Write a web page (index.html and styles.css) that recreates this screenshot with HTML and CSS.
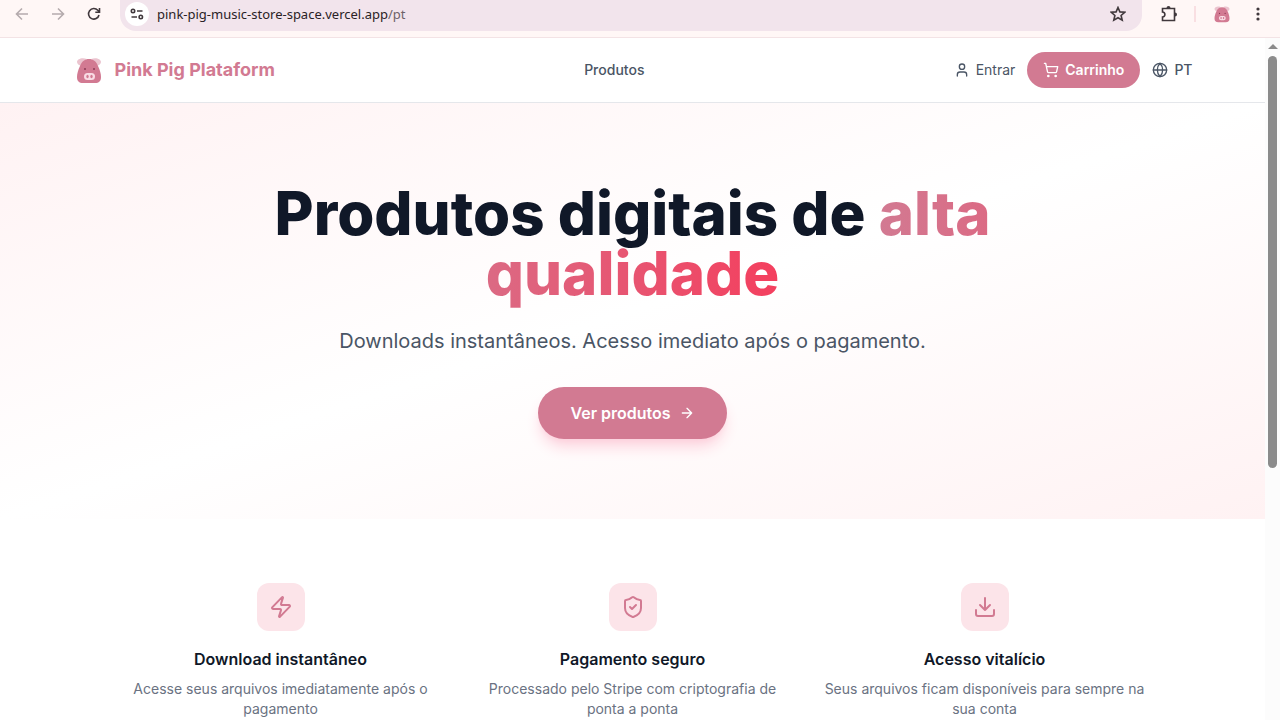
FILE: index.html
```html
<!DOCTYPE html>
<html lang="pt">
<head>
    <meta charset="utf-8">
    <title>Pink Pig Plataform</title>
    <link rel="stylesheet" href="styles.css">
</head>
<body>
    <svg class="symbols" aria-hidden="true">
        <symbol id="pig" viewBox="0 0 32 32">
            <path d="M4 8c0-3 5-5 10-3l-6 7c-2-1-4-2-4-4zM28 8c0-3-5-5-10-3l6 7c2-1 4-2 4-4z" fill="#ebc4cf"/>
            <path d="M16 5c4 0 7 2 9 7 2 4 3 8 3 11 0 4-2 6-6 6H10c-4 0-6-2-6-6 0-3 1-7 3-11 2-5 5-7 9-7z" fill="#d27a92"/>
            <circle cx="12" cy="15" r="1" fill="#8d3c56"/>
            <circle cx="21" cy="15" r="1" fill="#8d3c56"/>
            <rect x="11" y="19" width="11" height="7" rx="3.500" fill="#f9dce4"/>
            <ellipse cx="14.5" cy="22.500" rx="1.2" ry="1.800" fill="#d27a92"/>
            <ellipse cx="18.5" cy="22.500" rx="1.2" ry="1.800" fill="#d27a92"/>
        </symbol>
    </svg>

    <div class="toolbar">
        <div class="nav-buttons">
            <button type="button" class="tool muted" aria-label="Voltar">
                <svg width="16" height="16" viewBox="0 0 16 16"><path d="M14 8H2.500M8 2.500L2.500 8 8 13.500"/></svg>
            </button>
            <button type="button" class="tool muted" aria-label="Avançar">
                <svg width="16" height="16" viewBox="0 0 16 16"><path d="M2 8h11.500M8 2.500l5.500 5.500L8 13.500"/></svg>
            </button>
            <button type="button" class="tool" aria-label="Recarregar">
                <svg width="16" height="16" viewBox="0 0 16 16"><path d="M13 9a5.300 5.300 0 1 1-1.200-4.700L13.500 6M13.500 2v4.200H9.300"/></svg>
            </button>
        </div>
        <div class="address">
            <button type="button" class="site-info" aria-label="Informações do site">
                <svg width="14" height="14" viewBox="0 0 14 14"><circle cx="3" cy="4" r="1.700"/><path d="M7 4h5.500M1.500 10H7"/><circle cx="10.800" cy="10" r="1.700"/></svg>
            </button>
            <span class="url">pink-pig-music-store-space.vercel.app<span class="path">/pt</span></span>
            <button type="button" class="tool" aria-label="Favoritar">
                <svg width="16" height="16" viewBox="0 0 16 16"><path d="M8 1.500l1.900 4.400 4.800.4-3.600 3.200 1.100 4.700L8 11.700l-4.200 2.500 1.100-4.700L1.300 6.300l4.800-.4z"/></svg>
            </button>
        </div>
        <div class="extras">
            <button type="button" class="tool" aria-label="Extensões">
                <svg width="18" height="18" viewBox="0 0 18 18"><path d="M2.500 3.500h12v12h-12v-3.500c3.200-.4 3.200-4.600 0-5z"/><path d="M6.500 3a2 2 0 0 1 4 0zM15 7.500a2 2 0 0 1 0 4z" fill="currentColor" stroke="none"/></svg>
            </button>
            <span class="divider"></span>
            <svg width="20" height="20"><use href="#pig"/></svg>
            <button type="button" class="tool" aria-label="Menu">
                <svg width="16" height="16" viewBox="0 0 16 16"><g fill="currentColor" stroke="none"><circle cx="8" cy="3" r="1.600"/><circle cx="8" cy="8" r="1.600"/><circle cx="8" cy="13" r="1.600"/></g></svg>
            </button>
        </div>
    </div>

    <div class="viewport">
        <div class="page">
            <header class="header">
                <div class="container">
                    <a href="#" class="brand">
                        <svg width="32" height="32"><use href="#pig"/></svg>
                        Pink Pig Plataform
                    </a>
                    <nav><a href="#produtos" class="nav-link">Produtos</a></nav>
                    <div class="actions">
                        <a href="#" class="login">
                            <svg class="icon" width="16" height="16" viewBox="0 0 24 24"><path d="M19 21v-2a4 4 0 0 0-4-4H9a4 4 0 0 0-4 4v2"/><circle cx="12" cy="7" r="4"/></svg>
                            Entrar
                        </a>
                        <button type="button" class="cart">
                            <svg class="icon" width="16" height="16" viewBox="0 0 24 24"><circle cx="8" cy="21" r="1"/><circle cx="19" cy="21" r="1"/><path d="M2.050 2.050h2l2.660 12.420a2 2 0 0 0 2 1.580h9.780a2 2 0 0 0 1.950-1.570l1.650-7.430H5.120"/></svg>
                            Carrinho
                        </button>
                        <button type="button" class="lang">
                            <svg class="icon" width="16" height="16" viewBox="0 0 24 24"><circle cx="12" cy="12" r="10"/><path d="M12 2a14.500 14.500 0 0 0 0 20 14.500 14.500 0 0 0 0-20M2 12h20"/></svg>
                            PT
                        </button>
                    </div>
                </div>
            </header>

            <section class="hero">
                <h1>Produtos digitais de <span class="highlight">alta qualidade</span></h1>
                <p>Downloads instantâneos. Acesso imediato após o pagamento.</p>
                <a href="#produtos" class="cta">
                    Ver produtos
                    <svg class="icon" width="16" height="16" viewBox="0 0 24 24"><path d="M5 12h14M12 5l7 7-7 7"/></svg>
                </a>
            </section>

            <section class="features">
                <div class="feature">
                    <div class="feature-icon">
                        <svg class="icon" width="24" height="24" viewBox="0 0 24 24"><path d="M4 14a1 1 0 0 1-.78-1.630l9.900-10.200a.5.5 0 0 1 .86.460l-1.920 6.020A1 1 0 0 0 13 10h7a1 1 0 0 1 .78 1.630l-9.900 10.200a.5.5 0 0 1-.86-.460l1.920-6.020A1 1 0 0 0 11 14z"/></svg>
                    </div>
                    <h2>Download instantâneo</h2>
                    <p>Acesse seus arquivos imediatamente após o pagamento</p>
                </div>
                <div class="feature">
                    <div class="feature-icon">
                        <svg class="icon" width="24" height="24" viewBox="0 0 24 24"><path d="M20 13c0 5-3.500 7.500-7.660 8.950a1 1 0 0 1-.67-.010C7.500 20.500 4 18 4 13V6a1 1 0 0 1 1-1c2 0 4.500-1.200 6.240-2.720a1.170 1.170 0 0 1 1.520 0C14.510 3.810 17 5 19 5a1 1 0 0 1 1 1z"/><path d="M9 12l2 2 4-4"/></svg>
                    </div>
                    <h2>Pagamento seguro</h2>
                    <p>Processado pelo Stripe com criptografia de ponta a ponta</p>
                </div>
                <div class="feature">
                    <div class="feature-icon">
                        <svg class="icon" width="24" height="24" viewBox="0 0 24 24"><path d="M12 15V3M21 15v4a2 2 0 0 1-2 2H5a2 2 0 0 1-2-2v-4M7 10l5 5 5-5"/></svg>
                    </div>
                    <h2>Acesso vitalício</h2>
                    <p>Seus arquivos ficam disponíveis para sempre na sua conta</p>
                </div>
            </section>
        </div>
        <div class="scrollbar">
            <span class="arrow"></span>
            <span class="thumb"></span>
        </div>
    </div>
</body>
</html>
```
FILE: styles.css
```css
* {
    box-sizing: border-box;
}
body {
    display: flex;
    flex-direction: column;
    height: 100vh;
    margin: 0;
    overflow: hidden;
    font-family: Inter, "Liberation Sans", sans-serif;
    color: #101828;
    background-color: #fff;
}
h1, h2, p {
    margin: 0;
}
a {
    color: inherit;
    text-decoration: none;
}
button {
    padding: 0;
    border: none;
    background: none;
    font-family: inherit;
    color: inherit;
    cursor: pointer;
}
svg {
    display: block;
    flex-shrink: 0;
}
.symbols {
    position: absolute;
    width: 0;
    height: 0;
}
.icon {
    fill: none;
    stroke: currentColor;
    stroke-width: 2;
    stroke-linecap: round;
    stroke-linejoin: round;
}

/* Browser toolbar */
.toolbar {
    display: flex;
    align-items: flex-start;
    height: 38px;
    flex-shrink: 0;
    background-color: #fff7f6;
    border-bottom: 1px solid #f3e3e5;
}
.nav-buttons {
    display: flex;
    align-items: center;
    gap: 20px;
    height: 28px;
    padding: 0 18px 0 14px;
}
.tool {
    color: #40383c;
}
.tool svg, .site-info svg {
    fill: none;
    stroke: currentColor;
    stroke-width: 1.6;
}
.muted {
    color: #b5abad;
}
.address {
    display: flex;
    flex: 1;
    align-items: center;
    height: 31px;
    padding: 0 16px 3px 5px;
    border-radius: 0 0 16px 16px;
    background-color: #f2e4ec;
}
.site-info {
    display: flex;
    align-items: center;
    justify-content: center;
    width: 24px;
    height: 24px;
    border-radius: 50%;
    background-color: #fff;
    color: #40383c;
}
.url {
    flex: 1;
    padding-left: 8px;
    font-family: "Noto Sans", "Open Sans", sans-serif;
    font-size: 13px;
    line-height: 18px;
    color: #2a2226;
}
.path {
    color: #6d6268;
}
.extras {
    display: flex;
    align-items: center;
    height: 28px;
    padding: 0 14px 0 18px;
}
.divider {
    width: 2px;
    height: 16px;
    margin: 0 16px;
    background-color: #f9dfe2;
}
.extras .tool:last-child {
    margin-left: 18px;
}

/* Site */
.viewport {
    display: flex;
    flex: 1;
    min-height: 0;
}
.page {
    flex: 1;
    overflow: hidden;
}
.header {
    border-bottom: 1px solid #e5e7eb;
}
.container {
    display: flex;
    align-items: center;
    justify-content: space-between;
    max-width: 1152px;
    height: 64px;
    margin: 0 auto;
    padding: 0 16px;
}
.brand {
    display: flex;
    align-items: center;
    gap: 10px;
    font-size: 18px;
    line-height: 28px;
    font-weight: 700;
    color: #d27a92;
}
.nav-link {
    display: block;
    font-size: 14px;
    line-height: 20px;
    font-weight: 500;
    color: #4a5565;
}
.actions {
    display: flex;
    align-items: center;
    gap: 12px;
    font-size: 14px;
    color: #4a5565;
}
.login, .cart, .lang {
    display: flex;
    align-items: center;
    gap: 6px;
    font-size: 14px;
    line-height: 20px;
}
.cart {
    padding: 8px 16px;
    border-radius: 18px;
    background-color: #d27a92;
    color: #fff;
    font-weight: 600;
}
.lang {
    font-weight: 500;
}
.hero {
    display: flex;
    flex-direction: column;
    align-items: center;
    padding: 80px 16px;
    background: linear-gradient(to bottom right, #fff2f3, #fff, #fff2f3);
    text-align: center;
}
.hero h1 {
    max-width: 768px;
    font-size: 60px;
    line-height: 60px;
    font-weight: 800;
}
.highlight {
    background: linear-gradient(to right, #d27a92, #f43f5e);
    background-clip: text;
    -webkit-background-clip: text;
    color: transparent;
}
.hero p {
    margin-top: 24px;
    font-size: 20px;
    line-height: 28px;
    color: #4a5565;
}
.cta {
    display: flex;
    align-items: center;
    gap: 8px;
    margin-top: 32px;
    padding: 14px 32px;
    border-radius: 26px;
    background-color: #d27a92;
    box-shadow: 0 10px 15px -3px #fccfdb, 0 4px 6px -4px #fccfdb;
    color: #fff;
    font-size: 16px;
    line-height: 24px;
    font-weight: 600;
}
.features {
    display: grid;
    grid-template-columns: repeat(3, 1fr);
    gap: 32px;
    max-width: 1056px;
    margin: 0 auto;
    padding: 64px 16px;
    text-align: center;
}
.feature-icon {
    display: flex;
    align-items: center;
    justify-content: center;
    width: 48px;
    height: 48px;
    margin: 0 auto 16px;
    border-radius: 12px;
    background-color: #fce4e9;
    color: #d27a92;
}
.feature h2 {
    font-size: 16px;
    line-height: 24px;
    font-weight: 600;
}
.feature p {
    margin-top: 8px;
    font-size: 14px;
    line-height: 20px;
    color: #6a7282;
}

/* Scrollbar */
.scrollbar {
    display: flex;
    flex-direction: column;
    align-items: center;
    width: 15px;
    padding-top: 6px;
    background-color: #fcfcfc;
}
.arrow {
    border: 5px solid transparent;
    border-top: none;
    border-bottom: 5px solid #8b8b8b;
}
.thumb {
    width: 9px;
    height: 61%;
    margin-top: 7px;
    border-radius: 5px;
    background-color: #8b8b8b;
}
```
